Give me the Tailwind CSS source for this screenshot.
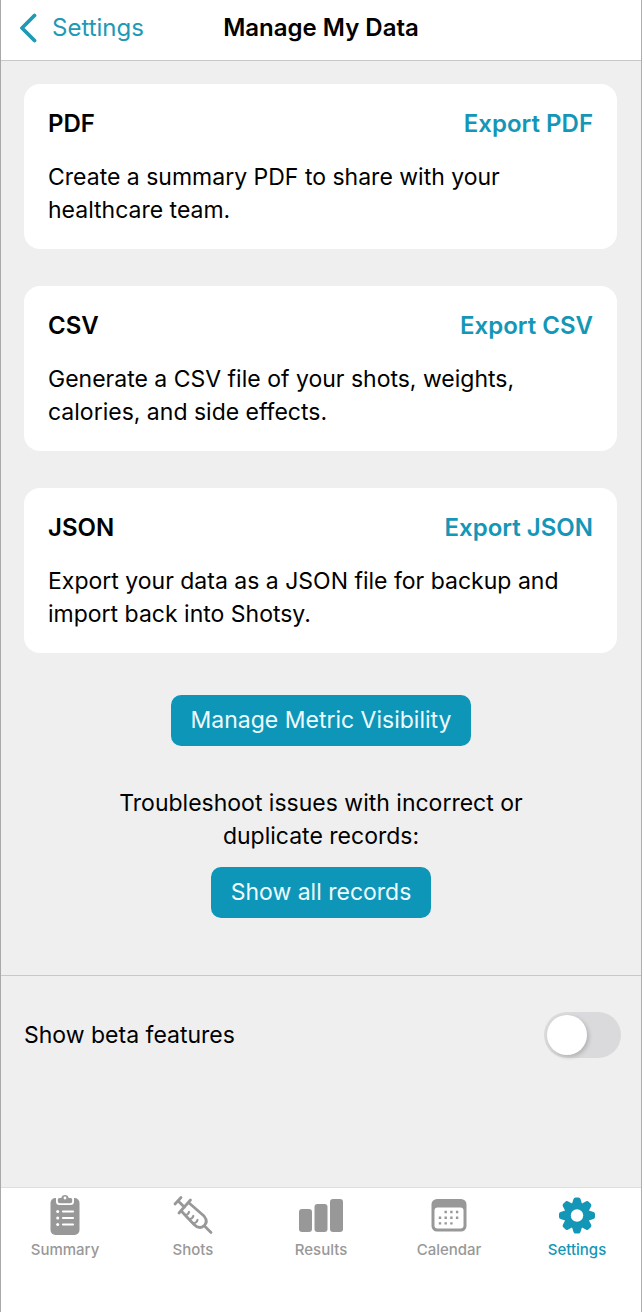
<!DOCTYPE html>
<html lang="en">
<head>
    <meta charset="UTF-8">
    <meta name="viewport" content="width=device-width, initial-scale=1.0">
    <title>Manage My Data</title>
    <script src="https://cdn.jsdelivr.net/npm/@tailwindcss/browser@4"></script>
</head>
<body class="min-h-screen flex flex-col bg-[#efefef] text-black text-[23px] border-l border-r border-l-[#a9a9a9] border-r-[#a3b5a5] font-['Inter','Liberation_Sans',sans-serif]">
    <header class="grid grid-cols-[1fr_auto_1fr] items-center h-[61px] pb-1 bg-white border-b border-[#c9c9c9] text-2xl">
        <a href="#" class="flex items-center gap-[15px] pl-[18px] text-[#2099b5]">
            <svg class="w-[18px] h-[30px]" viewBox="0 0 18 30" fill="none" stroke="currentColor" stroke-width="3.8" stroke-linecap="round" stroke-linejoin="round">
                <path d="M15.500 2.500 3 15l12.500 12.500"/>
            </svg>
            Settings
        </a>
        <h1 class="font-semibold">Manage My Data</h1>
    </header>

    <main class="flex-1">
        <div class="pt-[23px] pl-[23px] pr-6 space-y-[37px]">
            <section class="bg-white rounded-2xl px-6 pt-6 pb-[22px]">
                <div class="flex justify-between mb-[21px] text-2xl font-semibold leading-8">
                    <h2>PDF</h2>
                    <button class="text-[#1496b7] cursor-pointer">Export PDF</button>
                </div>
                <p class="leading-[33px]">Create a summary PDF to share with your healthcare team.</p>
            </section>

            <section class="bg-white rounded-2xl px-6 pt-6 pb-[22px]">
                <div class="flex justify-between mb-[21px] text-2xl font-semibold leading-8">
                    <h2>CSV</h2>
                    <button class="text-[#1496b7] cursor-pointer">Export CSV</button>
                </div>
                <p class="leading-[33px]">Generate a CSV file of your shots, weights, calories, and side effects.</p>
            </section>

            <section class="bg-white rounded-2xl px-6 pt-6 pb-[22px]">
                <div class="flex justify-between mb-[21px] text-2xl font-semibold leading-8">
                    <h2>JSON</h2>
                    <button class="text-[#1496b7] cursor-pointer">Export JSON</button>
                </div>
                <p class="leading-[33px] max-w-[530px]">Export your data as a JSON file for backup and import back into Shotsy.</p>
            </section>
        </div>

        <div class="flex flex-col items-center pt-[42px] pb-[57px] border-b border-[#c9c9c9]">
            <button class="h-[51px] px-5 rounded-[10px] bg-[#0e96b8] text-[#ecfbff] cursor-pointer">Manage Metric Visibility</button>
            <p class="max-w-[430px] mt-[41px] mb-[14px] text-center leading-[33px]">Troubleshoot issues with incorrect or duplicate records:</p>
            <button class="h-[51px] px-5 rounded-[10px] bg-[#0e96b8] text-[#ecfbff] cursor-pointer">Show all records</button>
        </div>

        <div class="flex items-center justify-between pt-9 pb-9 pl-[23px] pr-5">
            <label for="beta">Show beta features</label>
            <input id="beta" type="checkbox" role="switch" class="appearance-none w-[77px] h-[46px] p-[3px] rounded-full bg-[#dadadc] checked:bg-[#0e96b8] cursor-pointer before:block before:size-10 before:rounded-full before:bg-white before:shadow-[2px_2px_4px_rgba(0,0,0,0.18)] checked:before:translate-x-[31px]">
        </div>
    </main>

    <nav class="grid grid-cols-5 h-[125px] pt-[6px] bg-white border-t border-[#dcdfdf] text-[15px] leading-5 font-medium text-[#989898]">
        <a href="#" class="flex flex-col items-center gap-1">
            <svg class="w-[30px] h-[42px]" viewBox="0 0 30 42">
                <rect x="0.5" y="4" width="29" height="37" rx="5" fill="currentColor"/>
                <path d="M6 3v4.500q0 3.500 3.500 3.500h11q3.500 0 3.500-3.500V3z" fill="white"/>
                <path d="M7.800 5.500q0-1.500 1.500-1.500h2a3.800 3.800 0 0 1 7.400 0h2q1.500 0 1.500 1.500v1.700q0 2-2 2h-10.400q-2 0-2-2z" fill="currentColor"/>
                <circle cx="15" cy="4" r="1.400" fill="white"/>
                <path d="M13 17.500h10M13 24h10M13 30.500h10" stroke="white" stroke-width="2.200" stroke-linecap="round"/>
                <g fill="white">
                    <circle cx="7.700" cy="17.500" r="1.500"/>
                    <circle cx="7.700" cy="24" r="1.500"/>
                    <circle cx="7.700" cy="30.500" r="1.500"/>
                </g>
            </svg>
            Summary
        </a>
        <a href="#" class="flex flex-col items-center gap-1">
            <svg class="w-[40px] h-[42px]" viewBox="0 0 40 42" fill="none" stroke="currentColor" stroke-width="2.800" stroke-linecap="round" stroke-linejoin="round">
                <path d="M2 10 8 3.500M5 6.800l6.500 6.500M6 19 17.500 6M8 16.800 21 30.500q5.500 5.500 10 1.200 4.500-4 0-9.700L15.500 8.500M31.500 32l6.500 6.500"/>
                <path d="M12.500 21q2.500 0 3.500-3M16.800 25q2.500 0 3.500-3M21 29q2.500 0 3.500-3" stroke-width="2.200"/>
            </svg>
            Shots
        </a>
        <a href="#" class="flex flex-col items-center gap-1">
            <svg class="w-[44px] h-[42px]" viewBox="0 0 44 42" fill="currentColor">
                <rect x="0" y="15" width="13" height="23" rx="3"/>
                <rect x="15.500" y="10" width="13" height="28" rx="3"/>
                <rect x="31" y="5" width="13" height="33" rx="3"/>
            </svg>
            Results
        </a>
        <a href="#" class="flex flex-col items-center gap-1">
            <svg class="w-[36px] h-[42px]" viewBox="0 0 36 42" fill="currentColor">
                <rect x="0.500" y="5" width="35" height="32.500" rx="5.500"/>
                <rect x="3.500" y="13.500" width="29" height="21" rx="3" fill="white"/>
                <path d="M13.500 16.800h2.400v2.400h-2.400zM19.200 16.800h2.400v2.400h-2.400zM24.900 16.800h2.400v2.400h-2.400zM7.800 22.500h2.400v2.400H7.800zM13.500 22.500h2.400v2.400h-2.400zM19.200 22.500h2.400v2.400h-2.400zM24.900 22.500h2.400v2.400h-2.400zM7.800 28.200h2.400v2.400H7.800zM13.500 28.200h2.400v2.400h-2.400zM19.200 28.200h2.400v2.400h-2.400z"/>
            </svg>
            Calendar
        </a>
        <a href="#" aria-current="page" class="flex flex-col items-center gap-1 text-[#1496b7]">
            <svg class="w-[36px] h-[42px]" viewBox="-18 -21.500 36 42" fill="currentColor">
                <defs>
                    <path id="tooth" d="M-5.200-11l1.700-5.500q.5-1.500 2-1.500h3q1.500 0 2 1.500L5.200-11z"/>
                </defs>
                <circle r="12.800"/>
                <use href="#tooth"/>
                <use href="#tooth" transform="rotate(45)"/>
                <use href="#tooth" transform="rotate(90)"/>
                <use href="#tooth" transform="rotate(135)"/>
                <use href="#tooth" transform="rotate(180)"/>
                <use href="#tooth" transform="rotate(225)"/>
                <use href="#tooth" transform="rotate(270)"/>
                <use href="#tooth" transform="rotate(315)"/>
                <circle r="6.200" fill="white"/>
            </svg>
            Settings
        </a>
    </nav>
</body>
</html>
